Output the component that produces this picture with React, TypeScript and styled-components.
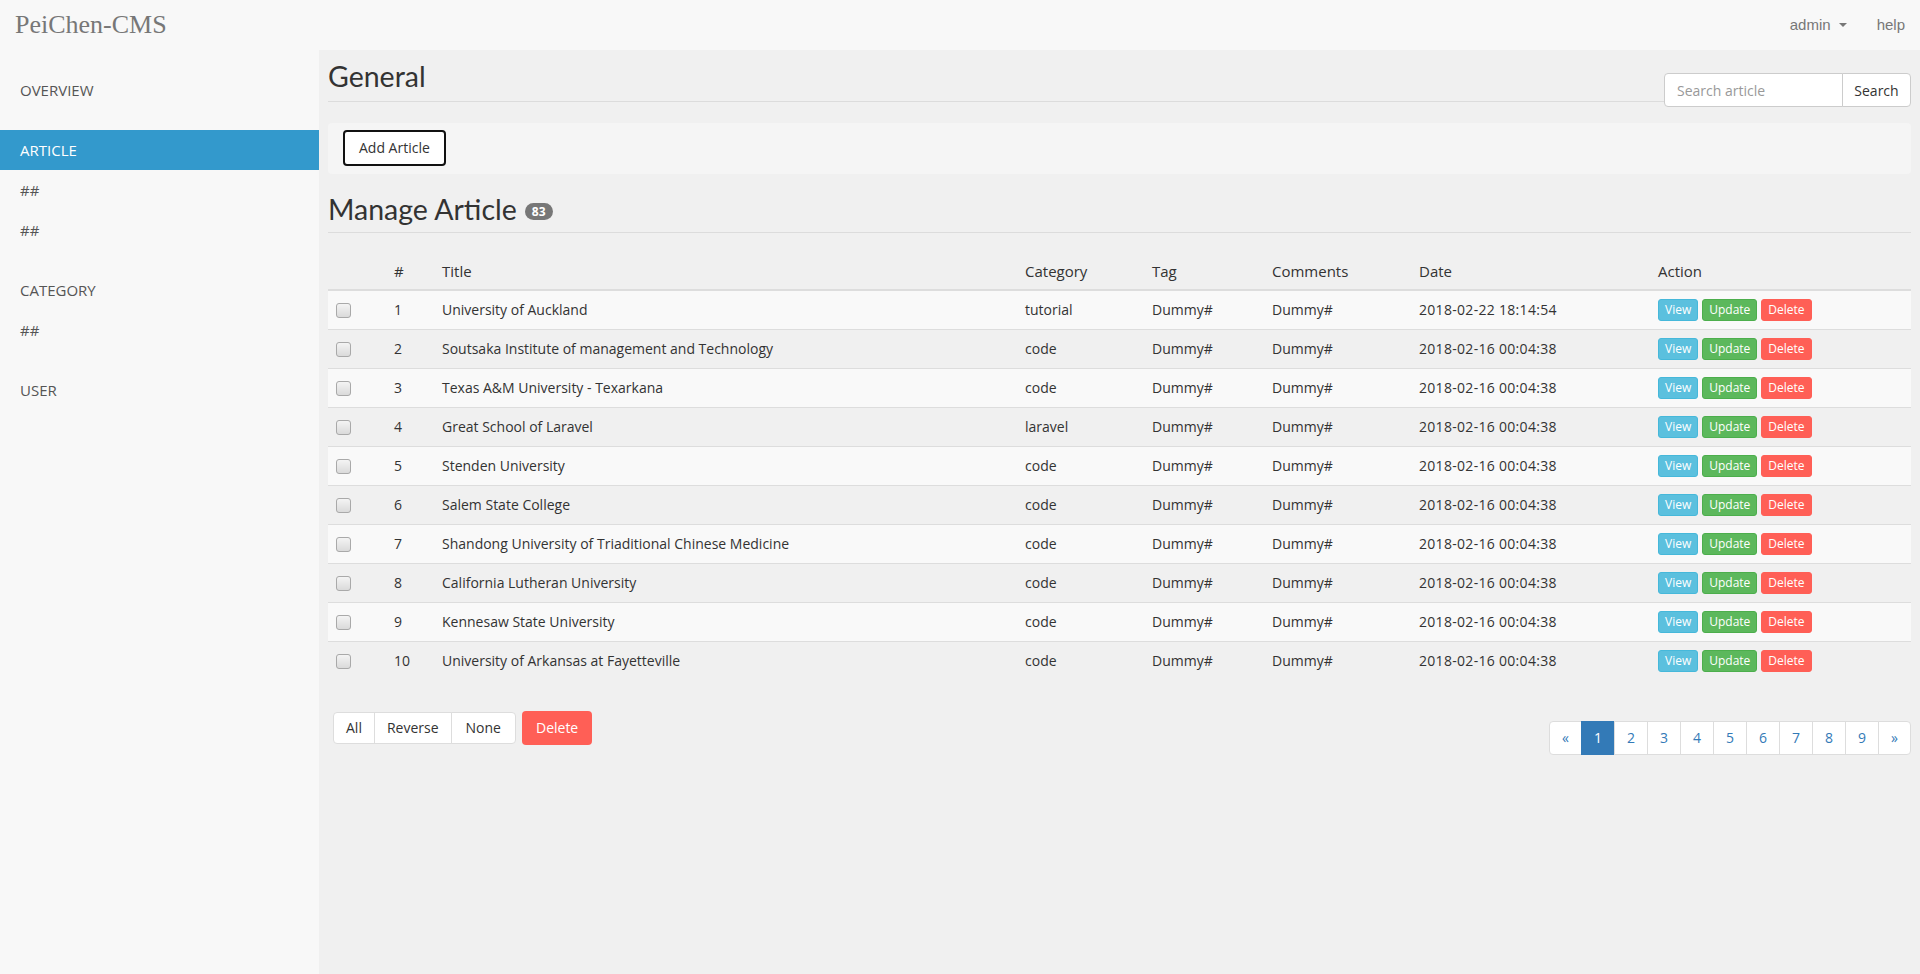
import React from "react";
import styled, { createGlobalStyle } from "styled-components";

const GlobalStyle = createGlobalStyle`
  html, body { margin: 0; padding: 0; }
  body {
    font-family: "Open Sans", "Noto Sans", sans-serif;
    font-size: 14px;
    color: #333;
    background: #f8f8f8;
  }
  * { box-sizing: border-box; }
`;

const Navbar = styled.header`
  height: 50px;
  display: flex;
  align-items: center;
  justify-content: space-between;
  background: #f8f8f8;
`;

const Brand = styled.a`
  font-family: "Liberation Serif", "Times New Roman", serif;
  font-size: 26px;
  color: #777;
  padding: 0 15px;
  line-height: 50px;
  text-decoration: none;
`;

const NavLinks = styled.nav`
  display: flex;
`;

const NavLink = styled.a`
  font-family: "Liberation Sans", Arial, sans-serif;
  font-size: 15px;
  color: #777;
  padding: 0 15px;
  line-height: 50px;
  display: flex;
  align-items: center;
  text-decoration: none;
`;

const Caret = styled.span`
  display: inline-block;
  width: 0;
  height: 0;
  margin-left: 8px;
  border-top: 4px solid #777;
  border-left: 4px solid transparent;
  border-right: 4px solid transparent;
`;

const Layout = styled.div`
  display: flex;
  min-height: calc(100vh - 50px);
`;

const Sidebar = styled.aside`
  width: 319px;
  flex-shrink: 0;
  background: #f8f8f8;
  padding-top: 20px;
`;

const NavGroup = styled.ul`
  list-style: none;
  margin: 0 0 20px;
  padding: 0;
`;

const NavItem = styled.li<{ $active?: boolean }>`
  height: 40px;
  line-height: 40px;
  padding: 0 20px;
  font-size: 15px;
  color: ${(p) => (p.$active ? "#fff" : "#555")};
  background: ${(p) => (p.$active ? "#3399cc" : "transparent")};
`;

const Main = styled.main`
  flex: 1;
  min-width: 0;
  background: #f0f0f0;
  padding: 0 9px 40px;
`;

const HeaderRow = styled.div`
  display: flex;
  align-items: flex-start;
`;

const PageHeader = styled.h2<{ $pad?: number }>`
  flex: 1;
  margin: 0;
  padding-bottom: ${(p) => p.$pad ?? 8}px;
  border-bottom: 1px solid #dcdcdc;
  font-family: Lato, "Open Sans", sans-serif;
  font-size: 28.5px;
  font-weight: 400;
  line-height: 33px;
  color: #333;
`;

const TopHeader = styled(PageHeader)`
  margin-top: 10px;
`;

const SectionHeader = styled(PageHeader)`
  margin-top: 19px;
  display: flex;
  align-items: center;
`;

const Badge = styled.span`
  display: inline-block;
  margin-left: 8px;
  margin-top: 3px;
  padding: 2px 7px;
  font-family: "Open Sans", sans-serif;
  font-size: 12px;
  font-weight: 700;
  line-height: 13px;
  color: #fff;
  background: #777;
  border-radius: 10px;
`;

const SearchForm = styled.form`
  display: flex;
  margin-top: 23px;
`;

const SearchInput = styled.input`
  width: 179px;
  height: 34px;
  padding: 6px 12px;
  font-family: inherit;
  font-size: 14px;
  color: #555;
  background: #fff;
  border: 1px solid #ccc;
  border-radius: 4px 0 0 4px;
  outline: none;
  &::placeholder { color: #999; }
`;

const SearchButton = styled.button`
  width: 69px;
  height: 34px;
  margin-left: -1px;
  font-family: inherit;
  font-size: 14px;
  color: #333;
  background: #fff;
  border: 1px solid #ccc;
  border-radius: 0 4px 4px 0;
`;

const Well = styled.div`
  margin-top: 16px;
  padding: 7px 15px 8px;
  background: #f5f5f5;
  border-radius: 4px;
`;

const OutlineButton = styled.button`
  padding: 6px 14px;
  font-family: inherit;
  font-size: 14px;
  line-height: 20px;
  color: #333;
  background: #fff;
  border: 2px solid #111;
  border-radius: 4px;
`;

const Table = styled.table`
  width: 100%;
  margin-top: 20px;
  border-collapse: collapse;
  table-layout: fixed;
`;

const Th = styled.th`
  padding: 8px;
  line-height: 20px;
  font-size: 15px;
  font-weight: 400;
  text-align: left;
  color: #333;
  border-bottom: 2px solid #ddd;
`;

const Row = styled.tr<{ $odd: boolean }>`
  background: ${(p) => (p.$odd ? "#f9f9f9" : "transparent")};
`;

const Td = styled.td<{ $tight?: boolean }>`
  padding: ${(p) => (p.$tight ? "8px" : "9px 8px")};
  line-height: 20px;
  font-size: 14px;
  color: #333;
  border-top: 1px solid #ddd;
  white-space: nowrap;
  overflow: hidden;
`;

const DateCell = styled(Td)`
  letter-spacing: 0.3px;
`;

const Check = styled.input`
  appearance: none;
  display: block;
  width: 15px;
  height: 15px;
  margin: 0;
  border: 1px solid #a9a9a9;
  border-radius: 3px;
  background: linear-gradient(#f4f4f4, #dadada);
`;

const Actions = styled.div`
  display: flex;
  gap: 4px;
`;

const XsButton = styled.button<{ $bg: string; $border: string }>`
  padding: 1px 6px;
  font-family: inherit;
  font-size: 12px;
  line-height: 18px;
  color: #fff;
  background: ${(p) => p.$bg};
  border: 1px solid ${(p) => p.$border};
  border-radius: 3px;
`;

const BottomBar = styled.div`
  display: flex;
  justify-content: space-between;
  align-items: flex-start;
  margin-top: 32px;
`;

const LeftControls = styled.div`
  display: flex;
  align-items: flex-start;
  margin-left: 5px;
`;

const BtnGroup = styled.div`
  display: flex;
`;

const GroupButton = styled.button`
  padding: 5px 12px;
  margin-left: -1px;
  font-family: inherit;
  font-size: 14px;
  line-height: 20px;
  color: #333;
  background: #fff;
  border: 1px solid #ddd;
  border-radius: 0;
  &:first-child { margin-left: 0; border-radius: 4px 0 0 4px; }
  &:last-child { padding: 5px 14px; border-radius: 0 4px 4px 0; }
`;

const DangerButton = styled.button`
  margin-left: 6px;
  margin-top: -1px;
  padding: 7px 14px;
  font-family: inherit;
  font-size: 14px;
  line-height: 20px;
  color: #fff;
  background: #ff5f56;
  border: none;
  border-radius: 4px;
`;

const Pagination = styled.ul`
  display: flex;
  list-style: none;
  margin: 9px 0 0;
  padding: 0;
`;

const PageItem = styled.li<{ $active?: boolean }>`
  margin-left: -1px;
  padding: 6px 12px;
  line-height: 20px;
  font-size: 14px;
  color: ${(p) => (p.$active ? "#fff" : "#337ab7")};
  background: ${(p) => (p.$active ? "#337ab7" : "#fff")};
  border: 1px solid ${(p) => (p.$active ? "#337ab7" : "#ddd")};
  &:first-child { margin-left: 0; border-radius: 4px 0 0 4px; }
  &:last-child { border-radius: 0 4px 4px 0; }
`;

const rows = [
  ["University of Auckland", "tutorial", "2018-02-22 18:14:54"],
  ["Soutsaka Institute of management and Technology", "code", "2018-02-16 00:04:38"],
  ["Texas A&M University - Texarkana", "code", "2018-02-16 00:04:38"],
  ["Great School of Laravel", "laravel", "2018-02-16 00:04:38"],
  ["Stenden University", "code", "2018-02-16 00:04:38"],
  ["Salem State College", "code", "2018-02-16 00:04:38"],
  ["Shandong University of Triaditional Chinese Medicine", "code", "2018-02-16 00:04:38"],
  ["California Lutheran University", "code", "2018-02-16 00:04:38"],
  ["Kennesaw State University", "code", "2018-02-16 00:04:38"],
  ["University of Arkansas at Fayetteville", "code", "2018-02-16 00:04:38"],
];

const colWidths = [58, 48, 583, 127, 120, 147, 239, 261];

export default function App() {
  return (
    <>
      <GlobalStyle />
      <Navbar>
        <Brand>PeiChen-CMS</Brand>
        <NavLinks>
          <NavLink>
            admin
            <Caret />
          </NavLink>
          <NavLink>help</NavLink>
        </NavLinks>
      </Navbar>
      <Layout>
        <Sidebar>
          <NavGroup>
            <NavItem>OVERVIEW</NavItem>
          </NavGroup>
          <NavGroup>
            <NavItem $active>ARTICLE</NavItem>
            <NavItem>##</NavItem>
            <NavItem>##</NavItem>
          </NavGroup>
          <NavGroup>
            <NavItem>CATEGORY</NavItem>
            <NavItem>##</NavItem>
          </NavGroup>
          <NavGroup>
            <NavItem>USER</NavItem>
          </NavGroup>
        </Sidebar>
        <Main>
          <HeaderRow>
            <TopHeader>General</TopHeader>
            <SearchForm onSubmit={(e) => e.preventDefault()}>
              <SearchInput placeholder="Search article" />
              <SearchButton type="submit">Search</SearchButton>
            </SearchForm>
          </HeaderRow>
          <Well>
            <OutlineButton>Add Article</OutlineButton>
          </Well>
          <SectionHeader $pad={6}>
            Manage Article <Badge>83</Badge>
          </SectionHeader>
          <Table>
            <colgroup>
              {colWidths.map((w, i) => (
                <col key={i} style={{ width: w }} />
              ))}
            </colgroup>
            <thead>
              <tr>
                <Th></Th>
                <Th>#</Th>
                <Th>Title</Th>
                <Th>Category</Th>
                <Th>Tag</Th>
                <Th>Comments</Th>
                <Th>Date</Th>
                <Th>Action</Th>
              </tr>
            </thead>
            <tbody>
              {rows.map((r, i) => (
                <Row key={i} $odd={i % 2 === 0}>
                  <Td>
                    <Check type="checkbox" />
                  </Td>
                  <Td>{i + 1}</Td>
                  <Td>{r[0]}</Td>
                  <Td>{r[1]}</Td>
                  <Td>Dummy#</Td>
                  <Td>Dummy#</Td>
                  <DateCell>{r[2]}</DateCell>
                  <Td $tight>
                    <Actions>
                      <XsButton $bg="#5bc0de" $border="#46b8da">View</XsButton>
                      <XsButton $bg="#5cb85c" $border="#4cae4c">Update</XsButton>
                      <XsButton $bg="#ff5f56" $border="#ff5f56">Delete</XsButton>
                    </Actions>
                  </Td>
                </Row>
              ))}
            </tbody>
          </Table>
          <BottomBar>
            <LeftControls>
              <BtnGroup>
                <GroupButton>All</GroupButton>
                <GroupButton>Reverse</GroupButton>
                <GroupButton>None</GroupButton>
              </BtnGroup>
              <DangerButton>Delete</DangerButton>
            </LeftControls>
            <Pagination>
              <PageItem>«</PageItem>
              {[1, 2, 3, 4, 5, 6, 7, 8, 9].map((n) => (
                <PageItem key={n} $active={n === 1}>
                  {n}
                </PageItem>
              ))}
              <PageItem>»</PageItem>
            </Pagination>
          </BottomBar>
        </Main>
      </Layout>
    </>
  );
}
